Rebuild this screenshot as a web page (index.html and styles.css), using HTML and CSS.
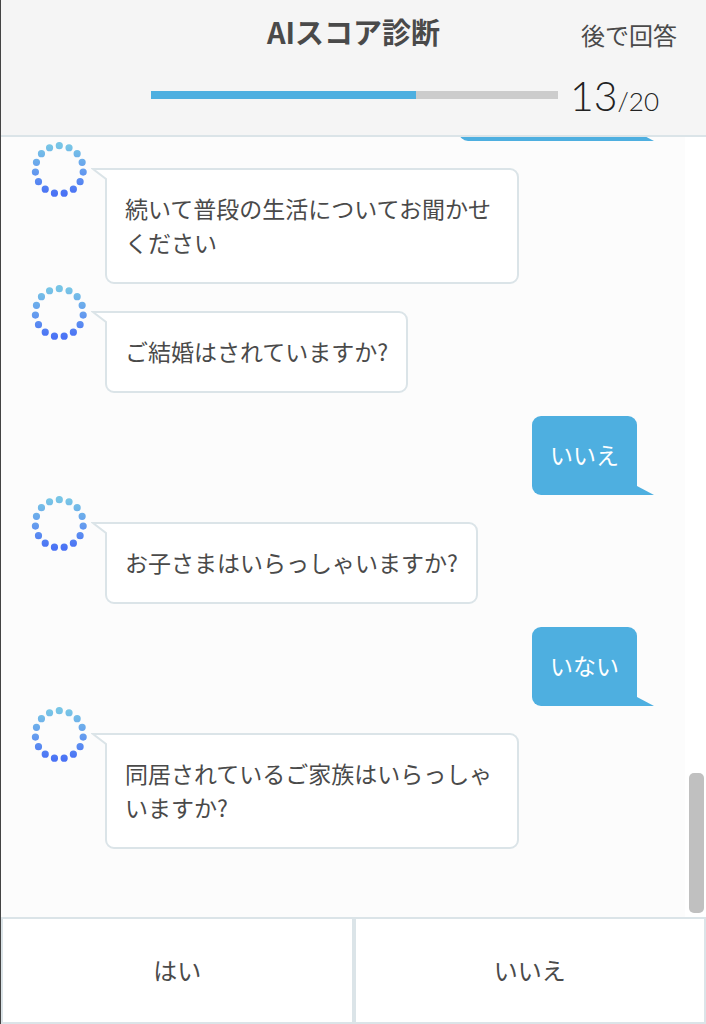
FILE: index.html
```html
<!DOCTYPE html>
<html lang="ja">
<head>
  <meta charset="UTF-8">
  <meta name="viewport" content="width=device-width, initial-scale=1">
  <title>AIスコア診断</title>
  <link rel="stylesheet" href="styles.css">
</head>
<body>
  <svg class="defs" aria-hidden="true">
    <defs>
      <linearGradient id="ring-color" gradientUnits="userSpaceOnUse" x1="0" y1="4" x2="0" y2="52">
        <stop offset="0" stop-color="#78c5e6"/>
        <stop offset="0.5" stop-color="#669eee"/>
        <stop offset="1" stop-color="#4a72f5"/>
      </linearGradient>
      <symbol id="ring" viewBox="0 0 56 56">
        <path d="M28.3 3.7a24 24 0 0 1 0 48a24 24 0 0 1 0 -48" pathLength="15" fill="none" stroke="url(#ring-color)" stroke-width="7.2" stroke-linecap="round" stroke-dasharray="0 1"/>
      </symbol>
      <symbol id="tail" viewBox="0 0 16 14">
        <path d="M16 0H1L14 11V14H16Z" fill="#fff"/>
        <path d="M16 1H2L15 11V14" fill="none" stroke="#dbe4e8" stroke-width="2"/>
      </symbol>
    </defs>
  </svg>

  <header class="header">
    <div class="title-row">
      <h1 class="title">AIスコア診断</h1>
      <button class="later" type="button">後で回答</button>
    </div>
    <div class="progress-row">
      <progress class="progress" value="13" max="20" aria-label="AIスコア診断"></progress>
      <div class="count">13<span class="total">/20</span></div>
    </div>
  </header>

  <main class="chat">
    <div class="messages">
      <div class="answer previous"></div>
      <div class="question">
        <svg class="ring" aria-hidden="true"><use href="#ring"/></svg>
        <p class="bubble"><svg class="tail" aria-hidden="true"><use href="#tail"/></svg>続いて普段の生活についてお聞かせください</p>
      </div>
      <div class="question">
        <svg class="ring" aria-hidden="true"><use href="#ring"/></svg>
        <p class="bubble"><svg class="tail" aria-hidden="true"><use href="#tail"/></svg>ご結婚はされていますか?</p>
      </div>
      <p class="answer">いいえ</p>
      <div class="question">
        <svg class="ring" aria-hidden="true"><use href="#ring"/></svg>
        <p class="bubble"><svg class="tail" aria-hidden="true"><use href="#tail"/></svg>お子さまはいらっしゃいますか?</p>
      </div>
      <p class="answer">いない</p>
      <div class="question">
        <svg class="ring" aria-hidden="true"><use href="#ring"/></svg>
        <p class="bubble"><svg class="tail" aria-hidden="true"><use href="#tail"/></svg>同居されているご家族はいらっしゃいますか?</p>
      </div>
    </div>
    <div class="track"><div class="thumb"></div></div>
  </main>

  <footer class="choices">
    <button class="choice" type="button">はい</button>
    <button class="choice" type="button">いいえ</button>
  </footer>
</body>
</html>
```
FILE: styles.css
```css
* { box-sizing: border-box; }
body { margin: 0; height: 100vh; display: flex; flex-direction: column; border-left: 1px solid #444; background: #fff; color: #4a4a4a; font-family: "Noto Sans CJK JP", sans-serif; }
button { font-family: inherit; color: inherit; cursor: pointer; }
.defs { position: absolute; width: 0; height: 0; }

.header { flex: none; background: #f5f5f5; border-bottom: 2px solid #dbe4e8; padding-bottom: 11px; }
.title-row { display: grid; grid-template-columns: 1fr auto 1fr; align-items: center; height: 66px; }
.title { grid-column: 2; margin: 0; padding-bottom: 4px; font-size: 29px; line-height: 62px; font-weight: bold; }
.later { justify-self: end; margin-right: 29px; padding: 4px 0 0; border: none; background: none; font-size: 24px; line-height: 60px; }
.progress-row { display: flex; align-items: center; gap: 12px; height: 58px; padding: 0 47px 0 150px; }
.progress { appearance: none; flex: 1; min-width: 0; height: 8px; border: none; background: #ccc; }
.progress::-webkit-progress-bar { background: #ccc; }
.progress::-webkit-progress-value { background: #4eafe0; }
.progress::-moz-progress-bar { background: #4eafe0; }
.count { padding-top: 6px; font-family: Lato, sans-serif; font-weight: 300; font-size: 41px; line-height: 58px; color: #222; }
.total { font-size: 26px; }

/* the newest message stays at the bottom, older ones run out under the header */
.chat { flex: 1; min-height: 0; display: flex; overflow: hidden; }
.messages { flex: 1; min-width: 0; display: flex; flex-direction: column; justify-content: flex-end; gap: 1px; padding: 0 48px 68px 30px; background: #fcfcfc; }
.question { flex: none; display: flex; align-items: flex-start; gap: 18px; }
.ring { flex: none; width: 56px; height: 56px; }
.bubble { position: relative; margin: 26px 0 0; max-width: 414px; padding: 21px 18px 23px; border: 2px solid #dbe4e8; border-radius: 0 9px 9px 9px; background: #fff; font-size: 23px; line-height: 34px; }
.tail { position: absolute; left: -16px; top: -2px; width: 16px; height: 14px; }
.answer { flex: none; position: relative; align-self: flex-end; margin: 22px 0 0; padding: 21px 18px 24px; border-radius: 9px 9px 0 9px; background: #4eafe0; color: #fff; font-size: 23px; line-height: 34px; }
.answer::after { content: ""; position: absolute; left: 100%; bottom: 0; width: 17px; height: 9px; background: #4eafe0; clip-path: polygon(0 0, 100% 100%, 0 100%); }
.previous { width: 178px; height: 79px; }

.track { flex: none; width: 21px; padding: 4px 2px 4px 4px; display: flex; align-items: flex-end; background: #fff; }
.thumb { flex: 1; height: 140px; border-radius: 5px; background: #c0c0c0; }

.choices { flex: none; display: flex; }
.choice { flex: 1; padding: 34px 0 35px; border: 2px solid #dbe4e8; background: #fff; font-size: 24px; line-height: 34px; }
```
